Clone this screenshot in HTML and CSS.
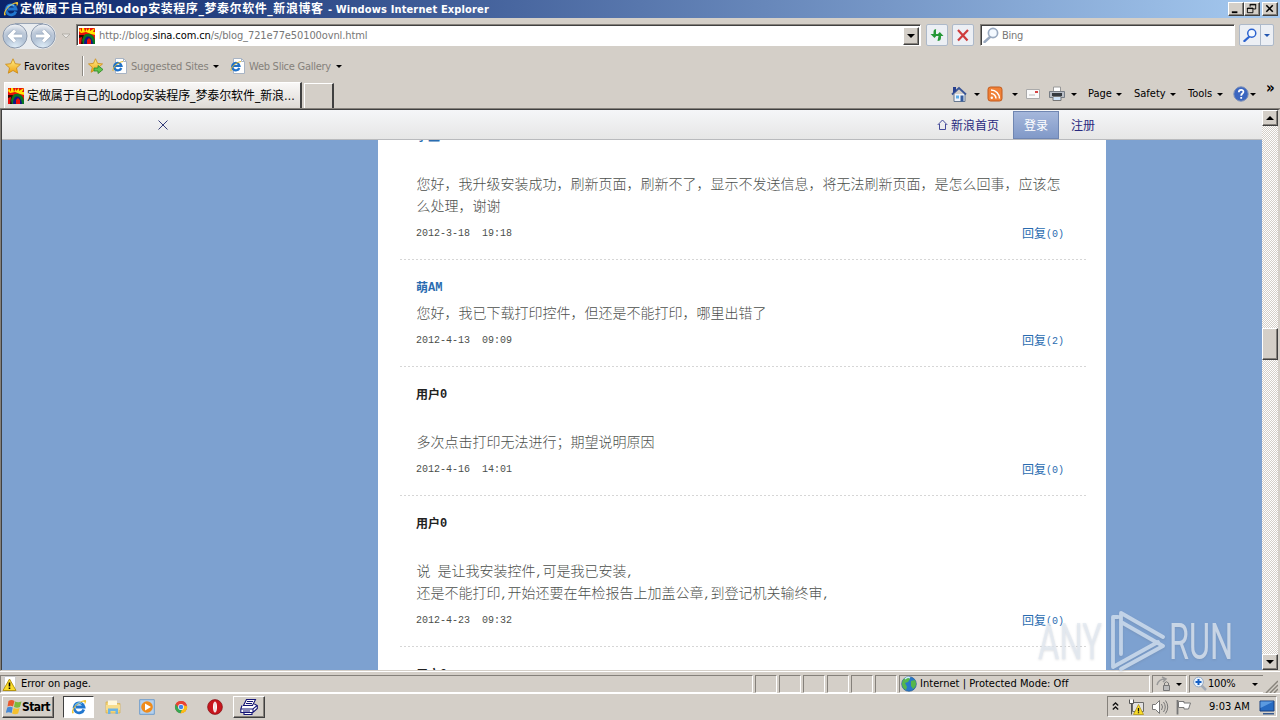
FILE: index.html
```
<!DOCTYPE html>
<html lang="zh-CN">
<head>
<meta charset="utf-8">
<title>定做属于自己的Lodop安装程序_梦泰尔软件_新浪博客</title>
<link rel="stylesheet" href="styles.css">
</head>
<body>
<svg width="0" height="0" class="defs">
  <defs>
    <radialGradient id="orb" cx=".5" cy="1" r=".95"><stop offset="0" stop-color="#e2f0fa"/><stop offset=".5" stop-color="#b3c3d6"/><stop offset=".75" stop-color="#bcc8d8"/><stop offset="1" stop-color="#eceff3"/></radialGradient>
    <linearGradient id="star" x2="0" y2="1"><stop stop-color="#fff08a"/><stop offset="1" stop-color="#f0a010"/></linearGradient>
    <symbol id="ie" viewBox="0 0 16 16"><path d="M12.800 10.500A5 5 0 1 1 13 8H5" fill="none" stroke="#2277cf" stroke-width="2.800"/><path d="M1.500 14.500C-1 12 5 3 14 1c2 0 1 3-.5 4.500C14.500 2 12 2 8 4.500 4 7 1 12 3 14" fill="#f2c532"/><path d="M4 6.500a5 5 0 0 1 7-2" stroke="#71c4f4" fill="none"/></symbol>
    <symbol id="iepage" viewBox="0 0 16 16"><path d="M3.500.5h8l3 3v12h-11z" fill="#fff" stroke="#a8b4c4"/><path d="M11.500.5v3h3" fill="none" stroke="#a8b4c4"/><path d="M9.300 10A3.700 3.700 0 1 1 9.500 8H3" fill="none" stroke="#2072c8" stroke-width="2.200"/><path d="M1 13C0 10 6 4 11 3.500" stroke="#e0b92e" fill="none"/></symbol>
    <symbol id="fire" viewBox="0 0 16 16"><path fill="#e90f09" d="M0 0h16v16H0z"/><path d="M1 0l2 4V0h2l1 4 2-4v3l3-3v3l5-3-2 4h2v3l-4-1-5-2-5 1-2-2z" fill="#ffe500"/><path d="M3 16C1 3 15 3 16 13v3z" fill="#087820"/><path d="M5 16c0-10 8-10 9 0z" fill="#111684"/><path d="M8 16v-4l2-2 2 2v4z" fill="#e90f09"/><path d="M0 7l5 0-2 5 1 4H0z" fill="#260c08"/><path d="M0 10l3-1-1 7H0z" fill="#e90f09"/></symbol>
    <symbol id="starshape" viewBox="0 0 16 16"><path d="M8 .8l2.200 4.900 5.300.6-4 3.600 1.200 5.300L8 12.500l-4.700 2.700 1.200-5.300-4-3.600 5.300-.6z" fill="url(#star)" stroke="#c98812" stroke-width=".8"/></symbol>
    <symbol id="lens" viewBox="0 0 16 16"><path d="M7 10L1.500 15" stroke="currentColor" stroke-width="2.400" stroke-linecap="round"/><circle cx="10" cy="6" r="4.600" fill="#f4f9ff" stroke="currentColor" stroke-width="1.700"/></symbol>
  </defs>
</svg>
<div class="screen">
  <header class="titlebar">
    <svg class="i16"><use href="#ie"/></svg>
    <div class="caption">定做属于自己的Lodop安装程序_梦泰尔软件_新浪博客 <span class="product">- Windows Internet Explorer</span></div>
    <div class="winbtns">
      <div class="raised"><svg viewBox="0 0 15 13"><path d="M3 9h6v2H3z"/></svg></div>
      <div class="raised"><svg viewBox="0 0 15 13"><path d="M5.500 4V1.500h6v5H9M5 2h7M2.500 5.500h6v5h-6zM2 6h7" fill="none" stroke="#000"/></svg></div>
      <div class="raised closebtn"><svg viewBox="0 0 15 13"><path d="M3.500 2.500l7 7m0-7l-7 7" stroke="#000" stroke-width="1.700"/></svg></div>
    </div>
  </header>

  <div class="navrow">
    <svg class="orbs" width="72" height="28" viewBox="0 0 72 28">
      <path d="M13 1h28a13 13 0 0 1 0 26H13z" fill="#e9ecef"/><path d="M13 1.500h28" stroke="#9aa5b5"/>
      <circle cx="13" cy="14" r="12" fill="url(#orb)" stroke="#8a98ad"/><circle cx="41" cy="14" r="12" fill="url(#orb)" stroke="#8a98ad"/>
      <path d="M20 14H8m5-5.500L7.500 14l5.500 5.500M34 14h12m-5-5.500l5.500 5.500-5.500 5.500" fill="none" stroke="#8fa0b6" stroke-width="4.400"/>
      <path d="M20 14H8m5-5.500L7.500 14l5.500 5.500M34 14h12m-5-5.500l5.500 5.500-5.500 5.500" fill="none" stroke="#fff" stroke-width="3.200"/>
      <path d="M60 12h8l-4 4z" fill="#e9e7e4" stroke="#aaa7a0" stroke-width=".8"/>
    </svg>
    <div class="field address">
      <svg class="i16"><use href="#fire"/></svg>
      <span class="url">http://blog.<b>sina.com.cn</b>/s/blog_721e77e50100ovnl.html</span>
      <div class="raised drop"><i class="arrow"></i></div>
    </div>
    <div class="toolbtn refresh"><svg class="i16" viewBox="0 0 16 16"><path d="M7.500 2Q4.500 2 4.500 5v2H1.500l4 4 3.500-4H7V2zM8.500 14q3.500 0 3.500-3.500V9h2.500l-3.700-4L7 9h2.500z" fill="#269838"/></svg></div>
    <div class="toolbtn stop"><svg class="i16" viewBox="0 0 16 16"><path d="M3 3l9.500 10.500M13 3L3 13.500" stroke="#cf3c3c" stroke-width="2.200"/></svg></div>
    <div class="field search"><svg class="i16 pale"><use href="#lens"/></svg><span>Bing</span></div>
    <div class="toolbtn go"><svg class="i14 blue"><use href="#lens"/></svg><div class="godrop"><i class="arrow bluearrow"></i></div></div>
  </div>

  <div class="favrow">
    <svg class="i16"><use href="#starshape"/></svg><span class="favlabel">Favorites</span>
    <i class="vline"></i>
    <svg class="i16" viewBox="0 0 16 16"><use href="#starshape" width="15" height="15"/><path d="M6 10h4V7.500l5 4-5 4V13H6z" fill="#62c44c" stroke="#278b26" stroke-width=".8"/></svg>
    <svg class="i16 pg1"><use href="#iepage"/></svg><span class="gray sugg">Suggested Sites</span><i class="arrow"></i>
    <svg class="i16 pg2"><use href="#iepage"/></svg><span class="gray wsg">Web Slice Gallery</span><i class="arrow"></i>
  </div>

  <div class="tabrow">
    <div class="tab"><svg class="i16"><use href="#fire"/></svg><span>定做属于自己的Lodop安装程序_梦泰尔软件_新浪…</span></div>
    <div class="newtab"></div>
    <div class="commands">
      <svg class="i16" viewBox="0 0 16 16"><path d="M3 8v7.500h11V8" fill="#eef3fb" stroke="#66788f"/><path d="M1 8.500L8 2l7 6.500" fill="none" stroke="#3a5596" stroke-width="1.800"/><path d="M2 1h3v4L2 7z" fill="#28408e"/><path d="M5 9.500h3v3H5z" fill="#5faee8"/><path d="M9.500 9.500h3v6h-3z" fill="#355c9e"/></svg>
      <i class="arrow"></i>
      <svg class="i16" viewBox="0 0 16 16"><rect x="1" y="1" width="14" height="14" rx="2.500" fill="#f08036" stroke="#c35b1c"/><path d="M4 7.500a5 5 0 0 1 5 5M4 4a8.500 8.500 0 0 1 8.500 8.500" fill="none" stroke="#fff" stroke-width="1.500"/><circle cx="4.800" cy="11.800" r="1.200" fill="#fff"/></svg>
      <i class="arrow"></i>
      <svg class="i16" viewBox="0 0 16 16"><path d="M1.500 3.500h13v9h-13z" fill="#fafafa" stroke="#aaa"/><path d="M10 5h3v2h-3z" fill="#d64343"/><path d="M4 9h6" stroke="#bbb"/></svg>
      <svg class="i16" viewBox="0 0 16 16"><path d="M4.500 1h7v5h-7z" fill="#fff" stroke="#999"/><path d="M.5 5.500h15v6H.5z" fill="#b9bec6" stroke="#777d85"/><path d="M3 7h10v3H3z" fill="#353a40"/><path d="M4 10.500h8v4H4z" fill="#cfe3f8" stroke="#777"/></svg>
      <i class="arrow"></i>
      <span>Page</span><i class="arrow"></i><span class="safety">Safety</span><i class="arrow"></i><span>Tools</span><i class="arrow"></i>
      <svg class="i16" viewBox="0 0 16 16"><circle cx="8" cy="8" r="7.200" fill="#3b66c0" stroke="#7b8fb8"/><path d="M5.800 6.300C5.800 3 10.700 3.200 10.400 6 10.200 7.700 8.200 7.500 8.200 9.800M8.200 11v1.700" fill="none" stroke="#fff" stroke-width="1.800"/></svg>
      <i class="arrow"></i>
      <span class="more">»</span>
    </div>
  </div>

  <main class="viewport">
    <div class="page">
      <nav class="sinabar">
        <svg class="close" width="12" height="12"><path d="M1.500 1.500l9 9m0-9l-9 9" stroke="#343c78"/></svg>
        <a class="home"><svg width="11" height="12"><path d="M.7 6L5.500 1l4.800 5M2.500 5v5.500h6V5" fill="none" stroke="#454b99"/></svg>新浪首页</a>
        <a class="login">登录</a>
        <a class="register">注册</a>
      </nav>
      <div class="bluebg">
        <section class="sheet">
          <article class="comment">
            <h4 class="link">李生</h4><p class="blank"></p>
            <p class="body">您好，我升级安装成功，刷新页面，刷新不了，显示不发送信息，将无法刷新页面，是怎么回事，应该怎<br>么处理，谢谢</p>
            <footer><time>2012-3-18&nbsp; 19:18</time><a>回复<em>(0)</em></a></footer>
          </article>
          <article class="comment">
            <h4 class="link">萌<em>AM</em></h4>
            <p class="body">您好，我已下载打印控件，但还是不能打印，哪里出错了</p>
            <footer><time>2012-4-13&nbsp; 09:09</time><a>回复<em>(2)</em></a></footer>
          </article>
          <article class="comment">
            <h4>用户<em>0</em></h4><p class="blank"></p>
            <p class="body">多次点击打印无法进行；期望说明原因</p>
            <footer><time>2012-4-16&nbsp; 14:01</time><a>回复<em>(0)</em></a></footer>
          </article>
          <article class="comment">
            <h4>用户<em>0</em></h4><p class="blank"></p>
            <p class="body">说<em>&nbsp;</em>是让我安装控件<em>,</em>可是我已安装<em>,</em><br>还是不能打印<em>,</em>开始还要在年检报告上加盖公章<em>,</em>到登记机关输终审<em>,</em></p>
            <footer><time>2012-4-23&nbsp; 09:32</time><a>回复<em>(0)</em></a></footer>
          </article>
          <article class="comment"><h4>用户<em>0</em></h4></article>
        </section>
      </div>
    </div>
    <div class="scrollbar">
      <div class="raised sbtn"><i class="arrow up"></i></div>
      <div class="raised thumb"></div>
      <div class="raised sbtn"><i class="arrow"></i></div>
    </div>
  </main>

  <div class="status">
    <div class="cell"><svg class="i16" viewBox="0 0 16 16"><path d="M2.500.5h11v15h-11z" fill="#fff" stroke="#ccc"/><path d="M7.500 3L14 14.500H1z" fill="#fbdc28" stroke="#b59510"/><path d="M7.500 6.500v4M7.500 11.500v1.500" stroke="#000" stroke-width="1.600"/></svg><span class="err">Error on page.</span></div>
    <div class="cell"></div><div class="cell"></div><div class="cell"></div><div class="cell"></div><div class="cell"></div><div class="cell"></div>
    <div class="cell"><svg class="i16" viewBox="0 0 16 16"><circle cx="8" cy="8" r="7.300" fill="#2778c8" stroke="#285a94" stroke-width=".7"/><path d="M2 4c3-4 6-3 7-1L7 6 4 7l2 4-1 3C1 12 0 8 2 4M10 5l4-1c2 4 1 7-2 9l-2-3z" fill="#55b64c"/><path d="M4 3c2-2 4-2 5-1" stroke="#cdeeff" stroke-width="1.500" fill="none"/></svg><span class="zone">Internet | Protected Mode: Off</span></div>
    <div class="cell lockcell"><svg class="i16" viewBox="0 0 16 16"><path d="M1 9c1-4 4-6 8-6M6 1l4 2-3 3" fill="none" stroke="#999" stroke-width="1.500"/><path d="M7.500 9.500h6v5h-6z" fill="#bbb" stroke="#777"/><path d="M8.500 9V7q2-2.500 4 0v2" fill="none" stroke="#777"/></svg><i class="arrow"></i></div>
    <div class="cell zoomcell"><svg class="i16" viewBox="0 0 16 16"><path d="M9 9l5 5" stroke="#a2aab6" stroke-width="2.500"/><circle cx="6.500" cy="6" r="4.900" fill="#e8f3ff" stroke="#97a9bf"/><path d="M6.500 3v6M3.500 6h6" stroke="#1660c4" stroke-width="2"/></svg><span class="pct">100%</span><i class="arrow"></i></div>
    <svg class="grip" width="13" height="13"><path d="M1 13L13 1M5 13l8-8M9 13l4-4" stroke="#88847c" stroke-width="1.500"/></svg>
  </div>

  <div class="taskbar">
    <div class="raised start"><svg class="i16" viewBox="0 0 16 16"><path d="M2.500 2q3-2 6 0L7 7.500q-2.500-1.500-5.500 0z" fill="#e8592d"/><path d="M9 2.500q3 1.500 6.500 0l-1.500 5.500q-3 1.500-6 0z" fill="#7db93b"/><path d="M1.200 8.500q3-1.500 5.500 0l-1 5.500q-3-1.500-6 0z" fill="#4789d5"/><path d="M7.600 9q3 1.500 6 0l-1.500 5.500q-3 1.500-6 0z" fill="#f5c02d"/></svg><b>Start</b></div>
    <div class="pressed"><svg class="i16"><use href="#ie"/></svg></div>
    <div class="ql"><svg class="i16" viewBox="0 0 16 16"><path d="M1 3h5l1 1.500h8V14H1z" fill="#f4d577" stroke="#d4ae4b" stroke-width=".7"/><path d="M3 1.500h9v5H3z" fill="#fff8dc"/><path d="M1 6h14v5H1z" fill="#f7dd8c"/><path d="M3 15V9.500h10V15h-2.500v-3h-5v3z" fill="#6cb4e4"/></svg></div>
    <div class="ql"><svg class="i16" viewBox="0 0 16 16"><path d="M.7.7h14.600v14.600H.7z" fill="#b5d1ee" stroke="#6f9dcc"/><circle cx="8" cy="8" r="5.800" fill="#ef8b1b"/><path d="M6 4.500v7L12 8z" fill="#fff"/></svg></div>
    <div class="ql"><svg class="i14" viewBox="0 0 16 16"><circle cx="8" cy="8" r="7" fill="#e84234"/><path d="M2 4.500A7 7 0 0 0 7.500 15L11 9z" fill="#35a753"/><path d="M15 7A7 7 0 0 1 7.500 15L11 6z" fill="#fbbd15"/><path d="M2 4.500L5 9l6-3.500h3.500A7 7 0 0 0 2 4.500" fill="#e84234"/><circle cx="8" cy="8" r="3.300" fill="#fff"/><circle cx="8" cy="8" r="2.600" fill="#4285ed"/></svg></div>
    <div class="ql"><svg class="i16" viewBox="0 0 16 16"><circle cx="8" cy="8" r="7.400" fill="#c8161d" stroke="#811014" stroke-width=".7"/><ellipse cx="8" cy="8" rx="2" ry="5.500" fill="#fff"/><path d="M8 3v10" stroke="#e6c5c5"/></svg></div>
    <div class="raised printer"><svg width="18" height="16" viewBox="0 0 18 16"><path d="M6.500.5h9l-3 6h-9zM2 6.500L.8 10v3.500h12l4.500-4V6.500l-3-1.500M1 10h12l4-3.500M13 10v3.500M7 2.500h6M6 4.500h6M3 12h7M4 13.500v2h8v-2" fill="#fff" stroke="#141475" stroke-width="1.100"/></svg></div>
    <div class="tray">
      <svg width="7" height="9"><path d="M.8 3.500l2.700-2.500 2.700 2.500M.8 7.500L3.500 5l2.700 2.500" fill="none" stroke="#111" stroke-width="1.300"/></svg>
      <svg class="i16" viewBox="0 0 16 16"><path d="M4.500 3.500h11v9h-11z" fill="#e2e2e2" stroke="#6a6a6a"/><path d="M1.500.5v4h4v-4M3.500 5v10.500" fill="#fff" stroke="#555"/><path d="M10.500 5.500l5 10h-10z" fill="#f9dc28" stroke="#a98c12" stroke-width=".7"/><path d="M10.500 9v3.500M10.500 13.300v1" stroke="#111" stroke-width="1.300"/></svg>
      <svg class="i18" viewBox="0 0 18 16"><path d="M1.500 5.500h3l4-4v13l-4-4h-3z" fill="#fff" stroke="#777"/><path d="M10.500 5q2 3 0 6M12.500 3q3.500 5 0 10M14.500 1.500q4.500 6.500 0 13" fill="none" stroke="#777"/></svg>
      <svg class="i16" viewBox="0 0 16 16"><path d="M1.500 1v14.500" stroke="#777" stroke-width="1.800"/><path d="M2.500 2.500H8v1.500h6.500l-2 6H8V8.500H2.500z" fill="#fff" stroke="#777"/></svg>
      <span class="clock">9:03 AM</span>
      <svg class="i16 monitor" viewBox="0 0 16 16"><path d="M1 2h14v10H1z" fill="#276bc2" stroke="#183e7f"/><path d="M1.500 2.500h13L1.500 9z" fill="#5b9ae0"/><path d="M4 14h11v1.500H4z" fill="#385a8e"/></svg>
    </div>
  </div>

  <svg class="watermark" width="205" height="66" viewBox="0 0 205 66">
    <g fill="#e2e8f0" fill-opacity=".76" font-family="Roboto, sans-serif" font-size="50" font-weight="400">
      <text x="3" y="52" textLength="64" lengthAdjust="spacingAndGlyphs">ANY</text>
      <text x="134" y="52" textLength="64" lengthAdjust="spacingAndGlyphs">RUN</text>
    </g>
    <path d="M83 10h-5v50l45-25M86 47V6l42 24M86 15l42 24-42 23" fill="none" stroke="#cfdded" stroke-opacity=".85" stroke-width="3.800" stroke-linejoin="round" stroke-linecap="round"/>
  </svg>
</div>
</body>
</html>
```
FILE: styles.css
```
* { box-sizing: border-box; }
body { margin: 0; }
.defs { position: absolute; }
.screen {
  position: relative;
  width: 1280px; height: 720px;
  display: flex; flex-direction: column;
  overflow: hidden;
  background: #d4cfc8;
  color: #000;
  font: 11px/14px "DejaVu Sans Condensed", "Noto Sans CJK SC", sans-serif;
  white-space: nowrap;
}
svg { display: block; flex: none; }
em { font-style: normal; }
.i16 { width: 16px; height: 16px; }
.i14 { width: 14px; height: 14px; }
.i18 { width: 18px; height: 16px; }
.arrow { width: 0; height: 0; flex: none; border: 3px solid transparent; border-top-color: #000; border-bottom: 0; }
.arrow.up { border-top: 0; border-bottom: 3px solid #000; }
.raised {
  background: #d4cfc8;
  border: 1px solid; border-color: #fff #404040 #404040 #fff;
  box-shadow: inset -1px -1px #85817b;
  display: flex; align-items: center; justify-content: center;
}

.titlebar {
  height: 18px; flex: none;
  display: flex; align-items: center;
  padding: 0 2px 0 3px;
  background: linear-gradient(90deg, #0a246a, #a6caf0);
  color: #fff;
}
.caption { margin-left: 1px; font-weight: bold; font-size: 12px; letter-spacing: .58px; }
.product { font-size: 11px; letter-spacing: .14px; }
.winbtns { margin-left: auto; display: flex; }
.winbtns .raised { width: 16px; height: 14px; }
.winbtns .closebtn { margin-left: 2px; }
.winbtns svg { width: 14px; height: 12px; }

.navrow { height: 34px; flex: none; display: flex; align-items: center; padding-left: 2px; }
.orbs { margin-top: 1px; }
.field {
  height: 22px; background: #fff;
  border: 1px solid; border-color: #85817b #fff #fff #85817b;
  box-shadow: inset 1px 1px #404040;
  display: flex; align-items: center;
  color: #777;
}
.address { width: 845px; margin-left: 2px; padding: 1px 1px 0 2px; }
.url { margin-left: 4px; letter-spacing: -.11px; }
.url b { font-weight: normal; color: #000; }
.drop { width: 16px; height: 18px; margin-left: auto; }
.drop .arrow, .sbtn .arrow { border-left-width: 4px; border-right-width: 4px; }
.drop .arrow, .sbtn .arrow:not(.up) { border-top-width: 4px; }
.sbtn .up { border-bottom-width: 4px; }
.toolbtn {
  width: 22px; height: 22px; flex: none;
  display: flex; align-items: center; justify-content: center;
  border: 1px solid #adb9c9; border-radius: 2px;
  background: #eceff4;
}
.refresh { margin-left: 5px; }
.stop { margin-left: 4px; }
.search { width: 255px; margin-left: 6px; padding-left: 2px; }
.search span { margin: 2px 0 0 3px; letter-spacing: -.3px; }
.pale { color: #9aaac0; }
.blue { color: #2b62cf; margin: 0 3px; }
.go { width: 35px; margin-left: 4px; }
.godrop { height: 20px; width: 13px; border-left: 1px solid #adb9c9; display: flex; align-items: center; justify-content: center; }
.bluearrow { border-top-color: #2356b0; }

.favrow { height: 28px; flex: none; display: flex; align-items: center; padding-left: 5px; }
.favrow span { padding-top: 1px; }
.favlabel { margin-left: 3px; width: 58px; letter-spacing: .1px; }
.vline { width: 2px; height: 20px; border-left: 1px solid #8d8982; border-right: 1px solid #fff; margin-right: 4px; }
.gray { color: #85817b; }
.pg1 { margin-left: 8px; }
.pg2 { margin-left: 11px; }
.sugg { margin-left: 3px; width: 82px; letter-spacing: -.16px; }
.wsg { margin-left: 3px; width: 87px; letter-spacing: -.26px; }
.favrow .arrow { margin-left: 0; }

.tabrow { height: 29px; flex: none; display: flex; align-items: flex-end; padding-left: 4px; border-bottom: 1px solid #85817b; }
.tab {
  width: 298px; height: 26px;
  display: flex; align-items: center;
  padding-left: 3px;
  border: 1px solid #fff; border-right: 2px solid #404040; border-bottom: 0;
  background: linear-gradient(#f9f8f7, #dedad5);
  font-size: 12px; letter-spacing: -.1px;
}
.tab span { margin-left: 3px; }
.newtab { width: 30px; height: 25px; margin-left: 2px; border: 1px solid #fff; border-right: 2px solid #404040; border-bottom: 0; }
.commands {
  margin-left: 617px; height: 28px;
  display: grid; align-items: center;
  grid-template-columns: 23px 13px 25px 13px 24px 22px 17px 28px 18px 36px 18px 29px 16px 17px 16px 12px;
}
.more { font-size: 15px; font-weight: bold; align-self: start; margin-top: 1px; }

.viewport { height: 562px; flex: none; display: flex; padding-left: 1px; border-left: 1px solid #85817b; border-right: 2px solid #d4cfc8; border-top: 1px solid #404040; border-bottom: 1px solid #d4cfc8; background: #404040; }
.page { width: 1260px; display: flex; flex-direction: column; overflow: hidden; }
.sinabar {
  height: 30px; flex: none;
  display: flex; align-items: center;
  background: linear-gradient(#f5f6f8, #e6e6e6);
  border-bottom: 1px solid #b9babd;
  font: 12px/29px "Noto Sans CJK SC", sans-serif;
  color: #29297e;
}
.close { margin-left: 155px; }
.home { margin-left: 768px; width: 76px; display: flex; align-items: center; gap: 3px; }
.login { width: 46px; height: 28px; margin-top: 1px; border: 1px solid #7086b2; background: linear-gradient(#a5b7db, #8199c8); color: #fff; text-align: center; line-height: 25px; }
.register { margin-left: 12px; }
.bluebg { height: 530px; overflow: hidden; background: #7da1d0; padding-left: 376px; }
.sheet { width: 728px; height: 561px; background: #fff; padding: 0 20px 0 22px; margin-top: -31px; }
.comment {
  padding: 16px 22px 15px 16px;
  font: 12px/22px "Noto Sans CJK SC", sans-serif;
  color: #4c4f4c;
  background: repeating-linear-gradient(90deg, #d6d6d6 0 2px, #fff 2px 4px) bottom / 100% 1px no-repeat;
  border-bottom: 1px solid transparent;
  background-origin: border-box;
}
.comment h4 { margin: 0; height: 22px; font-size: 12px; font-weight: bold; color: #222; }
.comment .link, .comment a { color: #2a6cb0; }
.comment p { margin: 0; }
.comment .blank { height: 22px; }
.comment .body { margin: 3px 0 0 .5px; font-size: 14px; font-weight: 300; }
.comment footer { display: flex; justify-content: space-between; height: 22px; margin-top: 6px; }
.comment time, .comment em { font-family: "Liberation Mono", monospace; font-size: 10px; }
.comment time { line-height: 24px; }
.comment em { line-height: 0; vertical-align: 1px; }
.comment h4 em { font-size: 12px; }
.comment .body em { font-size: 11.67px; vertical-align: 0; }

.scrollbar { width: 16px; display: flex; flex-direction: column; background: repeating-conic-gradient(#d4cfc8 0 25%, #fff 0 50%) 0 0 / 2px 2px; }
.sbtn { height: 16px; flex: none; }
.thumb { height: 32px; margin: 202px 0 294px; flex: none; }

.status {
  height: 22px; flex: none;
  display: grid; column-gap: 2px;
  grid-template-columns: 753px repeat(6, 22px) 251px 35px 74px 13px;
  padding-top: 3px; border-top: 1px solid #fff;
}
.cell { height: 18px; border: 1px solid; border-color: #85817b #fff #fff #85817b; display: flex; align-items: center; padding-left: 1px; }
.err, .zone { margin-left: 3px; }
.err { letter-spacing: -.05px; }
.zone { letter-spacing: .03px; }
.lockcell { gap: 4px; padding-left: 3px; }
.pct { margin: 0 16px 0 0; letter-spacing: -.2px; }
.zoomcell { border-right: 0; padding-left: 2px; }
.grip { align-self: end; }

.taskbar { height: 27px; flex: none; display: flex; align-items: center; padding: 0 3px 1px 2px; border-top: 1px solid #fff; }
.start { width: 52px; height: 22px; font-size: 12px; letter-spacing: -.55px; gap: 0; }
.pressed { width: 31px; height: 22px; margin-left: 9px; background: #fff; border: 1px solid; border-color: #404040 #fff #fff #404040; display: flex; align-items: center; justify-content: center; }
.ql { width: 34px; display: flex; justify-content: center; }
.pressed + .ql { margin-left: 2px; }
.printer { width: 32px; height: 22px; margin-left: 1px; }
.tray {
  width: 170px; height: 21px; margin-left: auto;
  display: flex; align-items: center;
  padding-left: 4px; gap: 7px;
  border: 1px solid; border-color: #85817b #fff #fff #85817b;
}
.tray svg:first-child { margin-right: 2px; }
.clock { margin-left: 10px; width: 43px; }
.watermark { position: absolute; left: 1035px; top: 607px; filter: drop-shadow(0 1px 1px rgba(90, 100, 115, .25)); }
```
